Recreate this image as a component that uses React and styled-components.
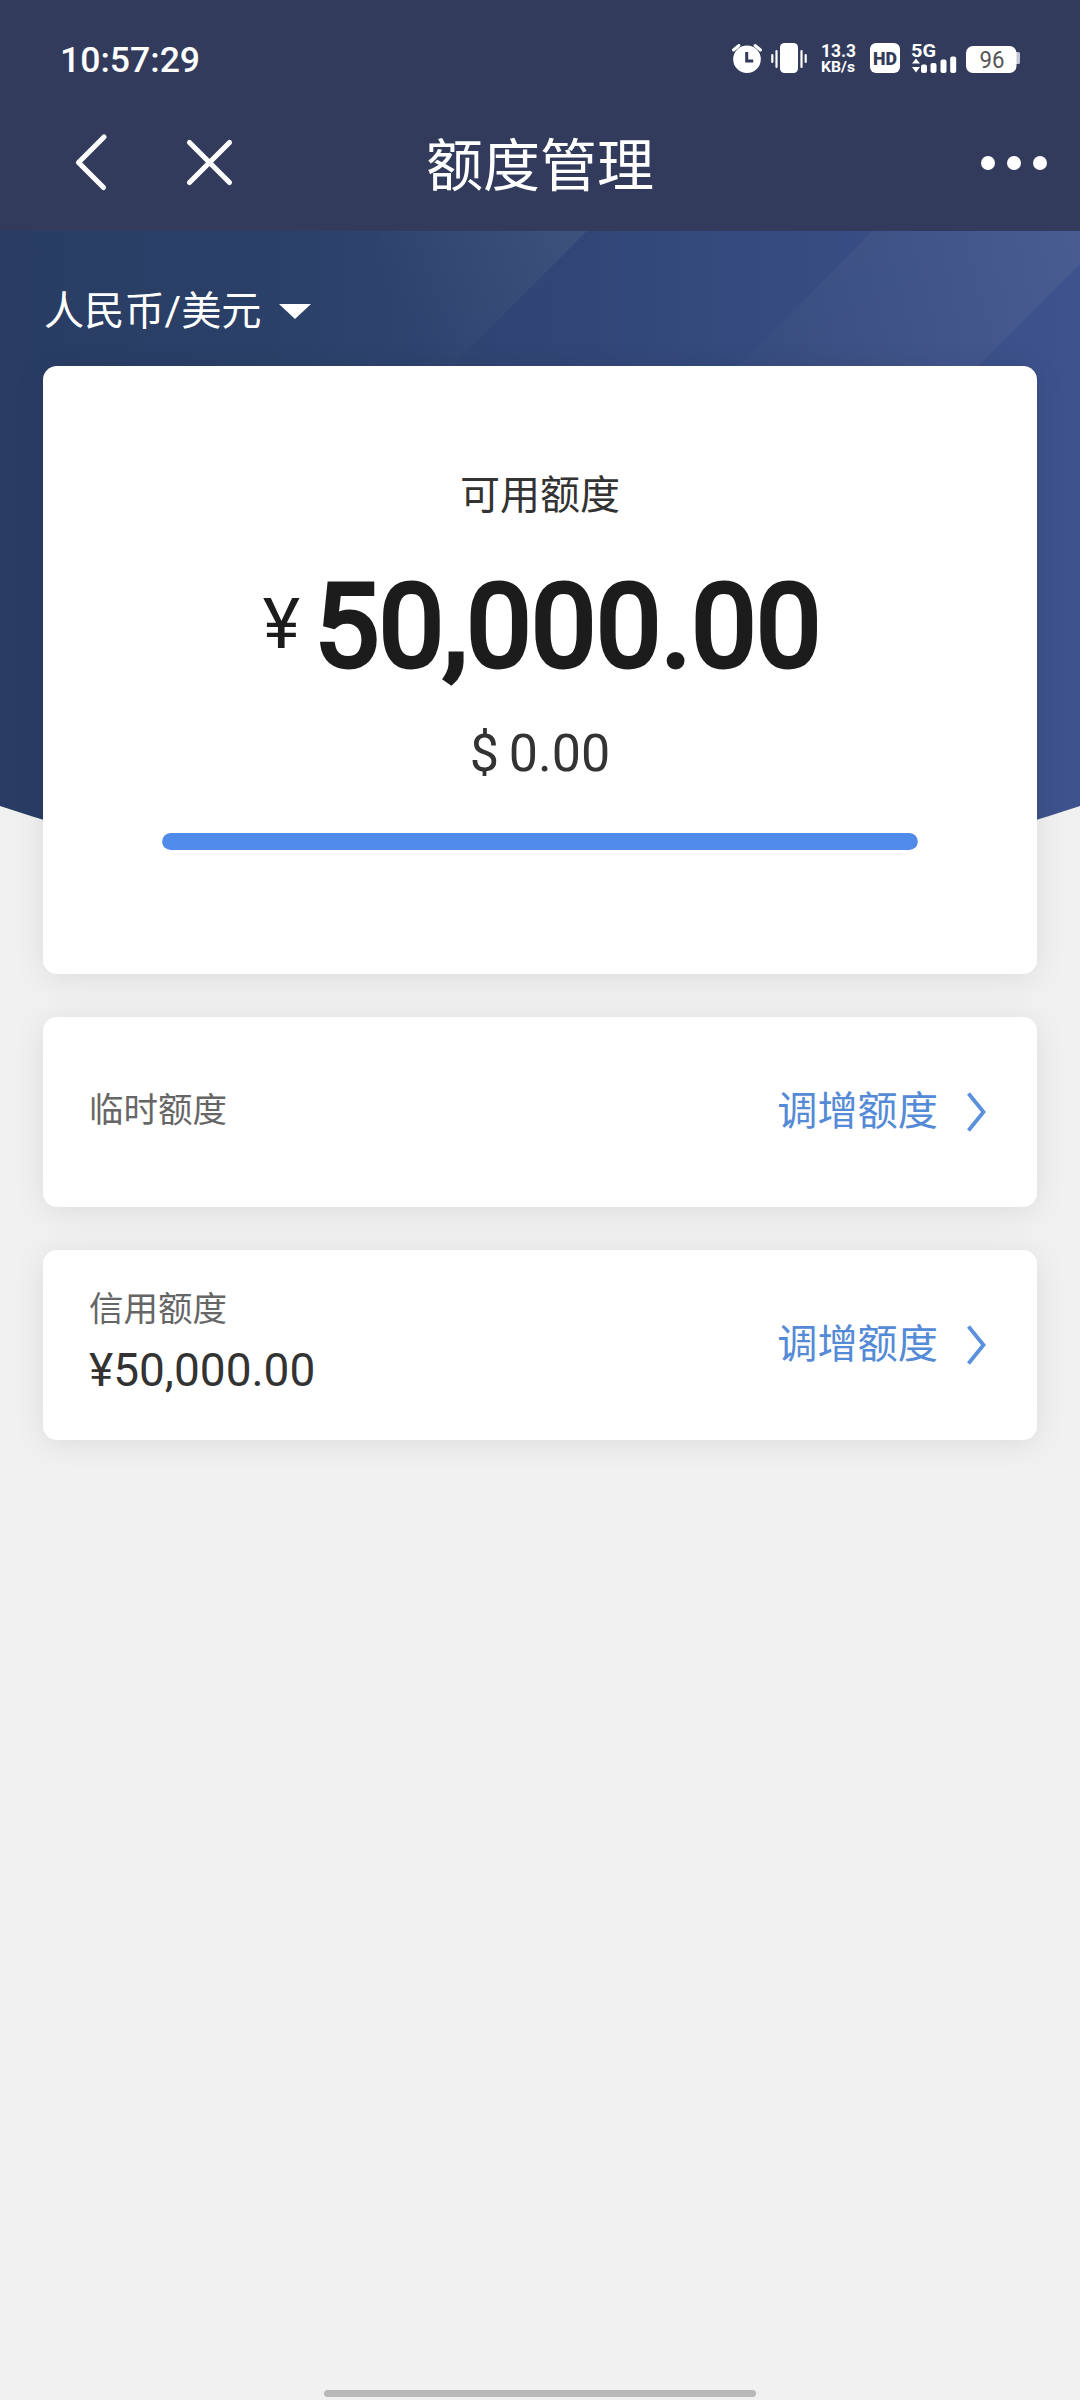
import styled, { createGlobalStyle, css } from "styled-components";

const GlobalStyle = createGlobalStyle`
  * {
    box-sizing: border-box;
  }
  body {
    margin: 0;
    background: #f1f1f1;
    font-family: Roboto, "Noto Sans CJK SC", sans-serif;
  }
`;

const Screen = styled.div`
  width: 1080px;
  height: 2400px;
  display: flex;
  flex-direction: column;
  background: #f1f1f1;
  overflow: hidden;
`;

const Header = styled.header`
  height: 231px;
  flex: none;
  background: #323b5b;
  color: #fff;
`;

const StatusBar = styled.div`
  height: 96px;
  padding: 21px 60px 0 60px;
  display: flex;
  align-items: flex-start;
  justify-content: space-between;
`;

const Clock = styled.span`
  margin-top: 18px;
  font-size: 35.6px;
  line-height: 42px;
  font-weight: 500;
`;

const StatusIcons = styled.svg`
  display: block;
  width: 350px;
  height: 79px;
  margin-right: -60px;
`;

const NavBar = styled.nav`
  height: 135px;
  padding: 0 33px 0 69px;
  display: grid;
  grid-template-columns: 1fr auto 1fr;
  align-items: center;
`;

const NavActions = styled.div`
  height: 60px;
  margin-top: -3px;
  display: flex;
  align-items: center;
  gap: 70px;
`;

const NavIcon = styled.svg`
  display: block;
  width: 50px;
  height: 60px;
  overflow: visible;
  fill: none;
  stroke: #fff;
  stroke-width: 5.2;
  stroke-linecap: round;
  stroke-linejoin: round;
`;

const Title = styled.h1`
  margin: 6px 0 0 -36px;
  font-size: 57px;
  line-height: 80px;
  font-weight: 400;
`;

const More = styled.div`
  margin-top: -2px;
  display: flex;
  justify-content: flex-end;
  gap: 12px;
`;

const Dot = styled.i`
  width: 14px;
  height: 14px;
  border-radius: 50%;
  background: #fff;
`;

const Content = styled.main`
  position: relative;
  flex: 1;
  padding: 0 43px;
  display: flex;
  flex-direction: column;
`;

const Backdrop = styled.svg`
  position: absolute;
  top: 0;
  left: 0;
  width: 1080px;
  height: 670px;
`;

const Currency = styled.div`
  position: relative;
  height: 135px;
  padding: 52px 0 0 1px;
  display: flex;
  align-items: flex-start;
  gap: 17px;
  color: #fff;
  font-size: 40.2px;
  line-height: 58px;
`;

const Caret = styled.i`
  margin-top: 21px;
  border: 16px solid transparent;
  border-top: 15px solid #fff;
  border-bottom: 0;
`;

const card = css`
  position: relative;
  background: #fff;
  border-radius: 14px;
  box-shadow: 0 4px 32px rgba(0, 0, 0, 0.09);
`;

const Summary = styled.section`
  ${card}
  height: 608px;
  display: flex;
  flex-direction: column;
  align-items: center;
  color: #333;
`;

const SummaryLabel = styled.div`
  margin-top: 101px;
  font-size: 40px;
  line-height: 58px;
`;

const Amount = styled.div`
  height: 144px;
  margin-top: 30px;
  padding-left: 4px;
  display: flex;
  align-items: flex-start;
  color: #1c1c1c;
`;

const Sign = styled.span`
  margin-top: 27px;
  margin-right: 14px;
  font-size: 71px;
  line-height: 84px;
`;

const Figure = styled.span`
  font-size: 115.4px;
  line-height: 144px;
  -webkit-text-stroke: 4.8px #1c1c1c;
`;

const Dollars = styled.div`
  margin-top: 25px;
  font-size: 52px;
  line-height: 60px;
  word-spacing: -3px;
`;

const Track = styled.div`
  width: 756px;
  height: 17px;
  margin-top: 49px;
  border-radius: 9px;
  background: #e6e6e6;
  overflow: hidden;
`;

const Fill = styled.div`
  height: 100%;
  border-radius: 9px;
  background: #518bea;
`;

const Row = styled.section`
  ${card}
  height: 190px;
  margin-top: 43px;
  padding: 0 50px 0 46px;
  display: flex;
  align-items: center;
  justify-content: space-between;
`;

const RowText = styled.div`
  padding-bottom: 4px;
  display: flex;
  flex-direction: column;
`;

const RowLabel = styled.span`
  font-size: 34.5px;
  line-height: 50px;
  color: #666;
`;

const RowValue = styled.span`
  margin: 9px 0 5px;
  font-size: 46px;
  line-height: 54px;
  color: #333;
`;

const Adjust = styled.a`
  display: flex;
  align-items: center;
  font-size: 40.2px;
  line-height: 58px;
  color: #558ad6;
`;

const Chevron = styled.svg`
  display: block;
  width: 22px;
  height: 44px;
  margin-left: 27px;
  fill: none;
  stroke: #5a90dc;
  stroke-width: 3.8;
`;

const HomeIndicator = styled.div`
  width: 432px;
  height: 7px;
  margin: auto auto 3px;
  border-radius: 4px;
  background: #b8b8b8;
`;

const limits = [
  { label: "临时额度", value: null },
  { label: "信用额度", value: "¥50,000.00" },
];

const usage = { available: 50000, total: 50000 };

const Status = () => (
  <StatusIcons viewBox="0 0 350 79" fill="#fff">
    {/* alarm */}
    <circle cx="17" cy="38.3" r="13.8" />
    <path d="M3.500 29l5.500-4.500M30.500 29l-5.500-4.500" stroke="#fff" strokeWidth="3" strokeLinecap="round" />
    <path d="M16.700 31v9h6.500" fill="none" stroke="#323b5b" strokeWidth="3" />
    {/* vibrate */}
    <rect x="50" y="22" width="18" height="30" rx="4.5" />
    <path
      d="M46.500 30v16M42.300 34v7M71.500 30v16M75.700 34v7"
      stroke="#fff"
      strokeWidth="2.2"
      strokeLinecap="round"
    />
    <text x="91" y="36" fontSize="18" fontWeight="700" textLength="35" lengthAdjust="spacingAndGlyphs">
      13.3
    </text>
    <text x="91" y="51.2" fontSize="15.5" fontWeight="700" textLength="34" lengthAdjust="spacingAndGlyphs">
      KB/s
    </text>
    {/* HD */}
    <rect x="140" y="22" width="30" height="30" rx="6" />
    <text
      x="143"
      y="43.8"
      fontSize="18.5"
      fontWeight="900"
      textLength="24"
      lengthAdjust="spacingAndGlyphs"
      fill="#323b5b"
    >
      HD
    </text>
    {/* signal */}
    <text x="181" y="36.3" fontSize="19" fontWeight="700" textLength="25" lengthAdjust="spacingAndGlyphs">
      5G
    </text>
    <path d="M182 42.500l4-5 4 5zM182 46l4 5.500 4-5.500z" />
    <rect x="191" y="43.5" width="6" height="8.5" rx="2" />
    <rect x="200.5" y="42" width="6" height="10" rx="2" />
    <rect x="210.5" y="38.5" width="6" height="13.5" rx="2" />
    <rect x="220.2" y="35.5" width="6" height="16.5" rx="2" />
    {/* battery */}
    <path d="M285 31h3.500a1.500 1.500 0 0 1 1.500 1.500v9a1.500 1.500 0 0 1-1.500 1.500H285z" fill="#c3c7d3" />
    <rect x="236" y="25" width="50.5" height="27" rx="7" />
    <text x="249.5" y="46.8" fontSize="23" textLength="25" lengthAdjust="spacingAndGlyphs" fill="#555">
      96
    </text>
  </StatusIcons>
);

const HeroBackdrop = () => (
  <Backdrop viewBox="0 0 1080 670">
    <defs>
      <linearGradient id="base" x1="0" y1="0" x2="1" y2="0">
        <stop offset="0" stopColor="#293d64" />
        <stop offset="0.25" stopColor="#2b4068" />
        <stop offset="0.6" stopColor="#33487a" />
        <stop offset="1" stopColor="#3e528d" />
      </linearGradient>
      <linearGradient id="beamLeft" gradientUnits="userSpaceOnUse" x1="570" y1="0" x2="400" y2="90">
        <stop offset="0" stopColor="#f0f4e0" stopOpacity="0.06" />
        <stop offset="1" stopColor="#f0f4e0" stopOpacity="0" />
      </linearGradient>
      <linearGradient id="beamRight" gradientUnits="userSpaceOnUse" x1="1060" y1="0" x2="790" y2="150">
        <stop offset="0" stopColor="#e8f0e0" stopOpacity="0.06" />
        <stop offset="1" stopColor="#e8f0e0" stopOpacity="0.015" />
      </linearGradient>
    </defs>
    <path d="M0 0H1080V575Q540 755 0 575Z" fill="url(#base)" />
    <path d="M380 0H587L452 135H330Z" fill="url(#beamLeft)" />
    <path d="M872 0H1080V33L978 135H740Z" fill="url(#beamRight)" />
  </Backdrop>
);

const LimitRow = ({ label, value }) => (
  <Row>
    <RowText>
      <RowLabel>{label}</RowLabel>
      {value && <RowValue>{value}</RowValue>}
    </RowText>
    <Adjust>
      调增额度
      <Chevron viewBox="0 0 22 44">
        <path d="M3.500 3.500l15 18.500-15 18.500" />
      </Chevron>
    </Adjust>
  </Row>
);

const App = () => {
  const percent = (usage.available / usage.total) * 100;

  return (
    <Screen lang="zh-CN">
      <GlobalStyle />
      <Header>
        <StatusBar>
          <Clock>10:57:29</Clock>
          <Status />
        </StatusBar>
        <NavBar>
          <NavActions>
            <NavIcon viewBox="0 0 50 60">
              <path d="M35 5L9.500 30.500l25 25" />
            </NavIcon>
            <NavIcon viewBox="0 0 50 60">
              <path d="M0.500 10.500l40 40M40.500 10.500l-40 40" />
            </NavIcon>
          </NavActions>
          <Title>额度管理</Title>
          <More>
            <Dot />
            <Dot />
            <Dot />
          </More>
        </NavBar>
      </Header>
      <Content>
        <HeroBackdrop />
        <Currency>
          人民币/美元
          <Caret />
        </Currency>
        <Summary>
          <SummaryLabel>可用额度</SummaryLabel>
          <Amount>
            <Sign>¥</Sign>
            <Figure>50,000.00</Figure>
          </Amount>
          <Dollars>$ 0.00</Dollars>
          <Track>
            <Fill style={{ width: `${percent}%` }} />
          </Track>
        </Summary>
        {limits.map((item) => (
          <LimitRow key={item.label} {...item} />
        ))}
        <HomeIndicator />
      </Content>
    </Screen>
  );
};

export default App;
